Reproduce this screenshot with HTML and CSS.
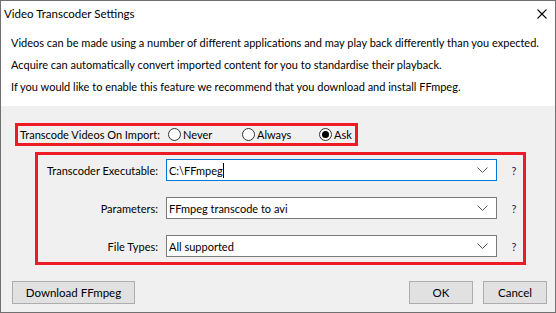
FILE: index.html
```html
<!DOCTYPE html>
<html lang="en">
<head>
    <meta charset="UTF-8">
    <title>Video Transcoder Settings</title>
<link rel="stylesheet" href="styles.css">
</head>
<body>

    <div class="window">

        <div class="top">
            <div class="title-bar">
                <span class="title">Video Transcoder Settings</span>
                <svg class="close" width="10" height="10" viewBox="0 0 10 10">
                    <path d="M0.5 0.5 L9.5 9.5 M9.5 0.5 L0.5 9.5" stroke="#000" stroke-width="1.1" fill="none"/>
                </svg>
            </div>
            <p class="intro">Videos can be made using a number of different applications and may play back differently than you expected.</p>
            <p class="intro">Acquire can automatically convert imported content for you to standardise their playback.</p>
            <p class="intro">If you would like to enable this feature we recommend that you download and install FFmpeg.</p>
        </div>

        <div class="body">

            <div class="mode-box">
                <span class="mode-label">Transcode Videos On Import:</span>
                <label class="radio radio-never"><span class="dot"></span>Never</label>
                <label class="radio radio-always"><span class="dot"></span>Always</label>
                <label class="radio radio-ask"><span class="dot checked"></span>Ask</label>
            </div>

            <div class="fields-box">
                <span class="field-label">Transcoder Executable:</span>
                <div class="combo focused">
                    <span class="combo-text">C:\FFmpeg<span class="caret"></span></span>
                    <svg class="chevron" width="11" height="7" viewBox="0 0 11 7"><path d="M0.5 0.5 L5.5 5.5 L10.5 0.5" stroke="#555" fill="none"/></svg>
                </div>
                <span class="help">?</span>

                <span class="field-label">Parameters:</span>
                <div class="combo">
                    <span class="combo-text">FFmpeg transcode to avi</span>
                    <svg class="chevron" width="11" height="7" viewBox="0 0 11 7"><path d="M0.5 0.5 L5.5 5.5 L10.5 0.5" stroke="#555" fill="none"/></svg>
                </div>
                <span class="help">?</span>

                <span class="field-label">File Types:</span>
                <div class="combo">
                    <span class="combo-text">All supported</span>
                    <svg class="chevron" width="11" height="7" viewBox="0 0 11 7"><path d="M0.5 0.5 L5.5 5.5 L10.5 0.5" stroke="#555" fill="none"/></svg>
                </div>
                <span class="help">?</span>
            </div>

            <div class="buttons">
                <button class="btn btn-download">Download FFmpeg</button>
                <span class="spacer"></span>
                <button class="btn">OK</button>
                <button class="btn">Cancel</button>
            </div>

        </div>

    </div>

</body>
</html>
```

FILE: styles.css
```css
*,*::before,*::after {
    box-sizing: border-box;
    margin: 0;
    padding: 0;
}

body {
    font-family: 'Lato', 'Noto Sans', sans-serif;
    font-size: 11px;
    color: #000;
    background-color: #fff;
}

.window {
    width: 556px;
    height: 313px;
    border: 1px solid #707070;
    display: flex;
    flex-direction: column;
    background-color: #f0f0f0;
}

/* white header with the title and intro text */
.top {
    background-color: #fff;
    height: 105px;
    padding: 0 0 0 10px;
}

.title-bar {
    height: 25px;
    margin-left: -7px;
    padding-right: 8px;
    display: flex;
    align-items: center;
    justify-content: space-between;
}

.title {
    font-size: 11.5px;
    line-height: 25px;
}

.intro {
    line-height: 22px;
    white-space: nowrap;
}

.title-bar + .intro {
    margin-top: 6px;
}

/* gray body */
.body {
    flex: 1;
    display: flex;
    flex-direction: column;
    padding: 17px 8px 8px 11px;
}

.mode-box {
    margin-left: 3px;
    width: 343px;
    height: 23px;
    border: 3px solid #ed1c24;
    display: flex;
    align-items: center;
    padding-left: 2px;
}

.mode-label {
    width: 148px;
    white-space: nowrap;
}

.radio {
    display: flex;
    align-items: center;
    white-space: nowrap;
}

.radio-never { width: 74px; }
.radio-always { width: 77px; }

.dot {
    width: 13px;
    height: 13px;
    border: 1px solid #333;
    border-radius: 50%;
    background-color: #fff;
    margin-right: 2px;
    display: flex;
    align-items: center;
    justify-content: center;
}

.dot.checked::after {
    content: "";
    width: 7px;
    height: 7px;
    border-radius: 50%;
    background-color: #000;
}

.fields-box {
    margin: 6px 0 0 23px;
    width: 491px;
    height: 113px;
    border: 3px solid #ed1c24;
    display: grid;
    grid-template-columns: 120px 331px 1fr;
    grid-auto-rows: 22px;
    column-gap: 8px;
    row-gap: 16px;
    padding-top: 4px;
    align-items: center;
}

.field-label {
    text-align: right;
    white-space: nowrap;
}

.combo {
    height: 22px;
    border: 1px solid #7a7a7a;
    background-color: #fff;
    display: flex;
    align-items: center;
    padding: 0 8px 0 2px;
}

.combo.focused {
    border-color: #0078d7;
}

.combo-text {
    flex: 1;
    display: flex;
    align-items: center;
    white-space: nowrap;
}

.caret {
    width: 1px;
    height: 15px;
    background-color: #000;
}

.help {
    text-align: center;
    color: #2a1850;
}

.buttons {
    margin-top: auto;
    display: flex;
    gap: 10px;
}

.spacer {
    flex: 1;
}

.btn {
    font-family: inherit;
    font-size: 11.5px;
    height: 23px;
    width: 64px;
    border: 1px solid #adadad;
    background-color: #e1e1e1;
    color: #000;
}

.btn-download {
    width: 123px;
}
```
